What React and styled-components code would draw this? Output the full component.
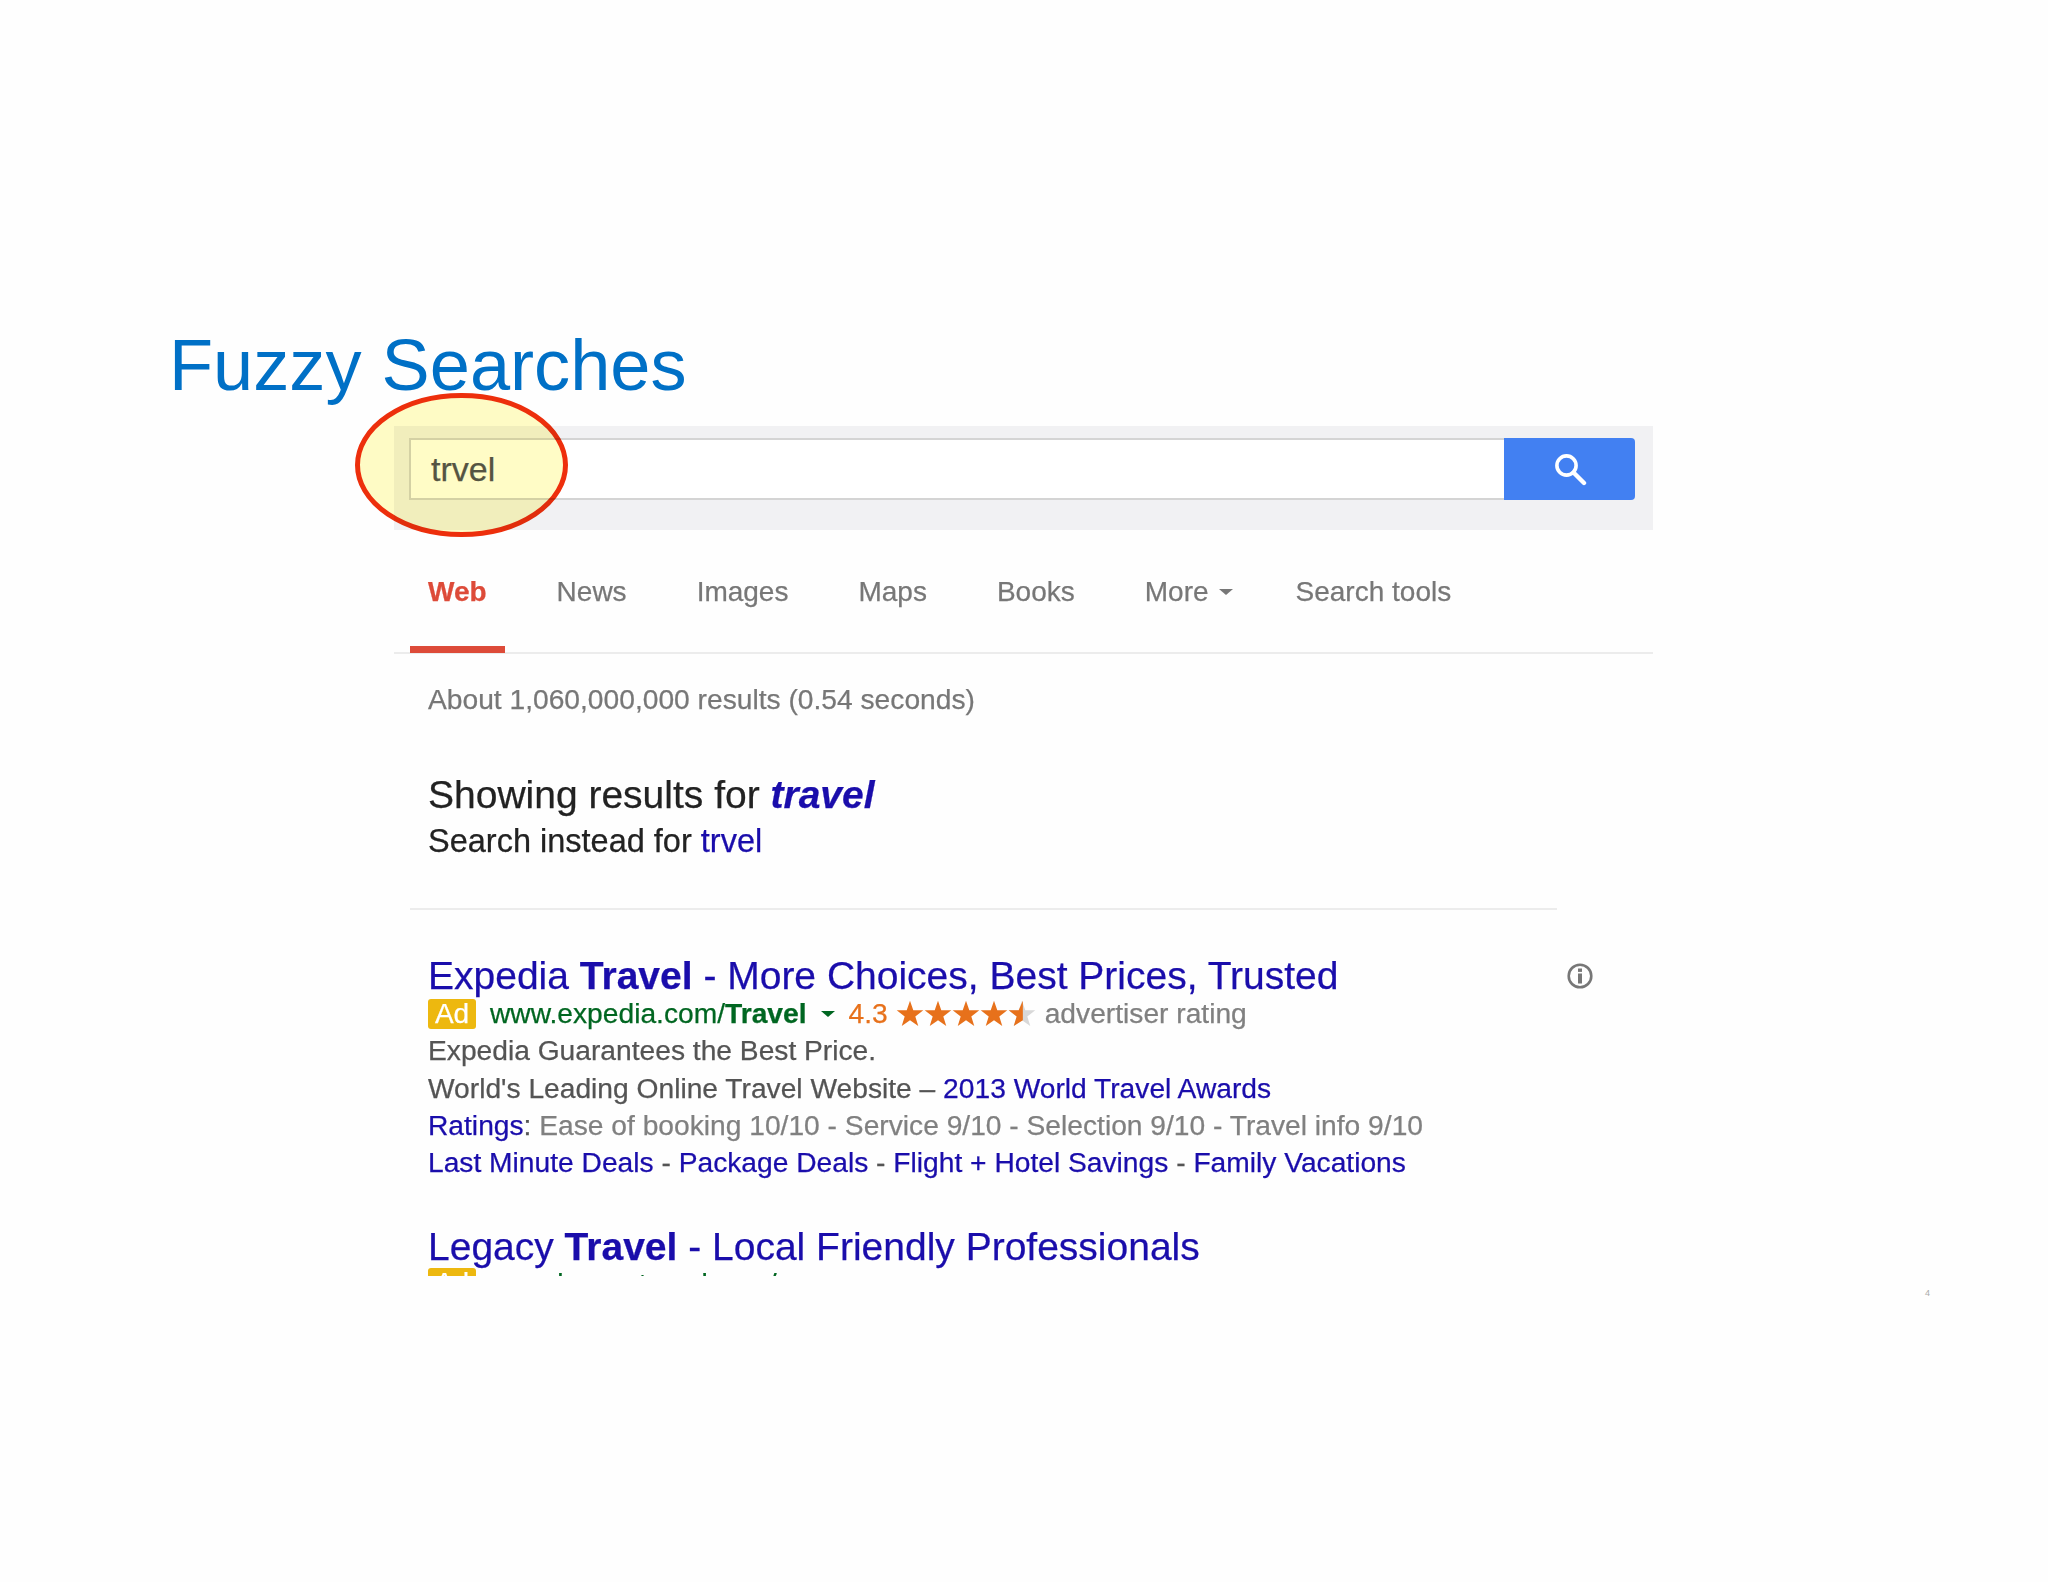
import React from 'react';
import styled, { createGlobalStyle } from 'styled-components';

const GlobalStyle = createGlobalStyle`
  html, body {
    margin: 0;
    padding: 0;
    background: #fefefe;
  }
  body {
    font-family: 'Liberation Sans', Arial, sans-serif;
  }
`;

const Slide = styled.div`
  width: 2048px;
  height: 1582px;
  padding-top: 325px;
  box-sizing: border-box;
  overflow: hidden;
`;

const SlideTitle = styled.h1`
  margin: 0 0 21px 169px;
  font-size: 72.2px;
  line-height: 80px;
  font-weight: 400;
  color: #0070c6;
`;

const Shot = styled.div`
  position: relative;
  width: 1259px;
  margin-left: 394px;
`;

const Clip = styled.div`
  height: 850px;
  overflow: hidden;
  filter: blur(0.4px);
  -webkit-text-stroke: 0.25px;
`;

const SearchStrip = styled.div`
  display: flex;
  height: 104px;
  box-sizing: border-box;
  padding: 12px 18px 0 15px;
  background: #f1f1f3;
`;

const SearchInput = styled.div`
  flex: 1;
  height: 62px;
  box-sizing: border-box;
  display: flex;
  align-items: center;
  padding-left: 20px;
  background: #fff;
  border: 2px solid #d4d4d4;
  border-right: 0;
  font-size: 34px;
  color: #555;
`;

const SearchButton = styled.div`
  width: 131px;
  height: 62px;
  display: flex;
  align-items: center;
  justify-content: center;
  background: #4280f2;
  border-radius: 0 4px 4px 0;
`;

const Tabs = styled.nav`
  display: flex;
  gap: 34px;
  height: 124px;
  box-sizing: border-box;
  padding-left: 16px;
  border-bottom: 2px solid #ececec;
`;

const Tab = styled.div`
  display: flex;
  align-items: center;
  gap: 10px;
  height: 123px;
  box-sizing: border-box;
  padding: 8px ${(p) => (p.$menu ? 11 : 18)}px 0 18px;
  font-size: 28px;
  font-weight: ${(p) => (p.$active ? 700 : 400)};
  color: ${(p) => (p.$active ? '#dd4b39' : '#777')};
  border-bottom: 7px solid ${(p) => (p.$active ? '#dd4b39' : 'transparent')};
`;

const Caret = styled.span`
  width: 0;
  height: 0;
  border-left: 7px solid transparent;
  border-right: 7px solid transparent;
  border-top: 6px solid ${(p) => p.$color || '#777'};
`;

const Content = styled.div`
  padding-left: 34px;
`;

const Stats = styled.div`
  padding-top: 28px;
  font-size: 28.2px;
  line-height: 34px;
  color: #777;
`;

const Correction = styled.div`
  padding-top: 56px;
  font-size: 39px;
  line-height: 46px;
  color: #222;
`;

const Instead = styled.div`
  padding-top: 3px;
  font-size: 32.5px;
  line-height: 40px;
  color: #222;
`;

const Link = styled.span`
  color: #1a0dab;
`;

const BlueLink = styled.span`
  color: #1a0dab;
  font-weight: ${(p) => (p.$strong ? 700 : 400)};
  font-style: ${(p) => (p.$italic ? 'italic' : 'normal')};
`;

const Rule = styled.hr`
  width: 1147px;
  margin: 47px 0 0 -18px;
  border: 0;
  border-top: 2px solid #ececec;
`;

const AdTitle = styled.div`
  display: flex;
  justify-content: space-between;
  align-items: center;
  padding-top: 47px;
  padding-right: 60px;
  font-size: 39px;
  line-height: 38px;
  color: #1a0dab;
`;

const AdRow = styled.div`
  display: flex;
  align-items: center;
  height: 37.3px;
  margin-top: ${(p) => (p.$lift ? -2 : 0)}px;
  font-size: 28.2px;
  white-space: pre;
  color: #545454;
`;

const AdBadge = styled.span`
  display: inline-flex;
  align-items: center;
  justify-content: center;
  width: 48px;
  height: 30px;
  margin-right: 14px;
  background: #edb80f;
  border-radius: 3px;
  color: #fff;
  font-size: 28px;
`;

const Url = styled.span`
  color: #006621;
  margin-right: 14px;
  b {
    font-weight: 700;
  }
`;

const Rating = styled.span`
  color: #e7711b;
  margin: 0 8px 0 14px;
`;

const Stars = styled.span`
  display: inline-flex;
  margin-right: 9px;
`;

const Muted = styled.span`
  color: #808080;
`;

const SlideNumber = styled.div`
  width: 1930px;
  margin-top: 12px;
  text-align: right;
  font-size: 9px;
  color: #aaa;
`;

const Highlight = styled.svg`
  position: absolute;
  left: -39px;
  top: -33px;
  width: 213px;
  height: 144px;
  mix-blend-mode: multiply;
`;

const STAR = 'M10 .5 12.35 7.26 19.5 7.4 13.8 11.74 15.9 18.6 10 14.5 4.1 18.6 6.2 11.74 .5 7.4 7.65 7.26Z';
const HALF_STAR = 'M10.6 .5 7.65 7.26 .5 7.4 6.2 11.74 4.1 18.6 10.6 14.5Z';

function Star({ half }) {
  return (
    <svg width="28" height="28" viewBox="0 0 20 20">
      <path d={STAR} fill={half ? '#d8d8d8' : '#e7711b'} />
      {half && <path d={HALF_STAR} fill="#e7711b" />}
    </svg>
  );
}

function InfoIcon() {
  return (
    <svg width="26" height="26" viewBox="0 0 26 26">
      <circle cx="13" cy="13" r="11.3" fill="none" stroke="#777" strokeWidth="2.6" />
      <rect x="11" y="5.5" width="4" height="3.4" fill="#777" />
      <rect x="11" y="10.5" width="4" height="10" fill="#777" />
    </svg>
  );
}

function SearchIcon() {
  return (
    <svg width="34" height="34" viewBox="0 0 34 34">
      <circle cx="13.5" cy="13.5" r="9.6" fill="none" stroke="#fff" strokeWidth="3.6" />
      <path d="M20.5 20.5 31 31" stroke="#fff" strokeWidth="4.4" strokeLinecap="round" />
    </svg>
  );
}

const tabs = ['News', 'Images', 'Maps', 'Books'];

export default function App() {
  return (
    <>
      <GlobalStyle />
      <Slide>
        <SlideTitle>Fuzzy Searches</SlideTitle>
        <Shot>
          <Clip>
            <SearchStrip>
              <SearchInput>trvel</SearchInput>
              <SearchButton>
                <SearchIcon />
              </SearchButton>
            </SearchStrip>
            <Tabs>
              <Tab $active>Web</Tab>
              {tabs.map((t) => (
                <Tab key={t}>{t}</Tab>
              ))}
              <Tab $menu>
                More
                <Caret />
              </Tab>
              <Tab>Search tools</Tab>
            </Tabs>
            <Content>
              <Stats>About 1,060,000,000 results (0.54 seconds)</Stats>
              <Correction>
                Showing results for <BlueLink $strong $italic>travel</BlueLink>
              </Correction>
              <Instead>
                Search instead for <Link>trvel</Link>
              </Instead>
              <Rule />
              <AdTitle>
                <span>
                  Expedia <b>Travel</b> - More Choices, Best Prices, Trusted
                </span>
                <InfoIcon />
              </AdTitle>
              <AdRow>
                <AdBadge>Ad</AdBadge>
                <Url>
                  www.expedia.com/<b>Travel</b>
                </Url>
                <Caret $color="#006621" />
                <Rating>4.3</Rating>
                <Stars>
                  <Star />
                  <Star />
                  <Star />
                  <Star />
                  <Star half />
                </Stars>
                <Muted>advertiser rating</Muted>
              </AdRow>
              <AdRow>Expedia Guarantees the Best Price.</AdRow>
              <AdRow>
                World's Leading Online Travel Website – <Link>2013 World Travel Awards</Link>
              </AdRow>
              <AdRow>
                <Link>Ratings</Link>: <Muted>Ease of booking 10/10 - Service 9/10 - Selection 9/10 - Travel info 9/10</Muted>
              </AdRow>
              <AdRow>
                <Link>Last Minute Deals</Link> - <Link>Package Deals</Link> - <Link>Flight + Hotel Savings</Link> - <Link>Family Vacations</Link>
              </AdRow>
              <AdTitle>
                <span>
                  Legacy <b>Travel</b> - Local Friendly Professionals
                </span>
              </AdTitle>
              <AdRow $lift>
                <AdBadge>Ad</AdBadge>
                <Url>www.legacytravel.com/</Url>
              </AdRow>
            </Content>
          </Clip>
          <Highlight viewBox="0 0 213 144">
            <ellipse cx="106.5" cy="72" rx="104" ry="69.5" fill="#fffcc6" stroke="#ee2f0c" strokeWidth="5" />
          </Highlight>
        </Shot>
        <SlideNumber>4</SlideNumber>
      </Slide>
    </>
  );
}
